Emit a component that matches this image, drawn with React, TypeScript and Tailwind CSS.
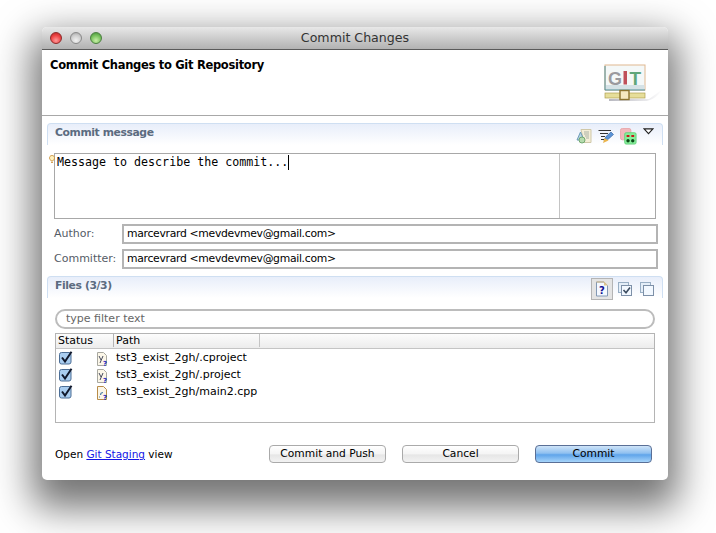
import type { ReactNode } from "react";

const uiFont = "font-['DejaVu_Sans',sans-serif]";

function TrafficLight({ color }: { color: "red" | "gray" | "green" }) {
  const fill =
    color === "red"
      ? "bg-[radial-gradient(circle_at_50%_75%,#ff9a9a_0%,#ee4444_55%,#b52020_100%)] border-[#8e2a2a]"
      : color === "green"
        ? "bg-[radial-gradient(circle_at_50%_75%,#c9f0a8_0%,#79c25e_55%,#3f8a34_100%)] border-[#4b7f40]"
        : "bg-[radial-gradient(circle_at_50%_75%,#f2f2f2_0%,#cfcfcf_55%,#a0a0a0_100%)] border-[#8a8a8a]";
  return <span className={`h-[12px] w-[12px] rounded-full border ${fill}`} />;
}

function GitLogo() {
  return (
    <svg width="62" height="40" viewBox="0 0 62 40">
      <defs>
        <linearGradient id="gitShade" x1="0" x2="1" y1="0" y2="0">
          <stop offset="0" stopColor="#b8b8c0" />
          <stop offset="1" stopColor="#ffffff" />
        </linearGradient>
      </defs>
      <path d="M6 35 H46 L60 25 C56 30 52 35 44 37 H6 Z" fill="url(#gitShade)" />
      <rect x="2" y="1" width="40" height="25" fill="#f4f8f8" stroke="#e0b890" strokeWidth="1" />
      <rect x="2.5" y="21" width="39" height="5" fill="#d5e2e6" />
      <path d="M2 2 V26 H42" fill="none" stroke="#4f8e96" strokeWidth="1" />
      <text x="5" y="20.5" fontFamily="Liberation Sans, sans-serif" fontWeight="700" fontSize="18" fill="#9a9a9e">G</text>
      <rect x="20.5" y="7" width="3.5" height="13.5" fill="#c0505a" />
      <text x="26.5" y="20.5" fontFamily="Liberation Sans, sans-serif" fontWeight="700" fontSize="19" fill="#5fa67a">T</text>
      <rect x="2" y="29" width="40" height="5" fill="#e6de9a" stroke="#b0a050" strokeWidth="0.7" />
      <rect x="17" y="26.5" width="9" height="9" fill="#f6e8c0" stroke="#8d7430" strokeWidth="1.4" />
    </svg>
  );
}

function TemplateIcon() {
  return (
    <svg width="16" height="16" viewBox="0 0 16 16">
      <path d="M5 1.5 H15 V14.5 H8 Z" fill="#f4eed8" stroke="#d0c8a8" />
      <path d="M8 4 H13 M8 6 H13 M9 8 H13 M10 10 H13" stroke="#a9b0a4" />
      <path d="M4.5 4 L1 12 H8 Z" fill="#b8d4e4" stroke="#6c9cb8" />
      <circle cx="6" cy="12" r="3" fill="#b6dcae" stroke="#72a870" />
    </svg>
  );
}

function SignIcon() {
  return (
    <svg width="16" height="16" viewBox="0 0 16 16">
      <path d="M0.5 2.5 H13 M2 5.5 H10 M3 8.5 H7 M3 11.5 H6" stroke="#333" />
      <path d="M6 12.5 L8 8.5 L13 4 L15.5 6.5 L10.5 11 Z" fill="#5b93d6" stroke="#2f5f9e" strokeWidth="0.6" />
      <path d="M5 15 L6.5 10 L10.5 12.5 Z" fill="#eab44c" />
    </svg>
  );
}

function ChangeIdIcon() {
  return (
    <svg width="17" height="17" viewBox="0 0 18 18">
      <rect x="0.5" y="0.5" width="11" height="12" rx="2" fill="#f2b8bc" stroke="#e8a8ac" />
      <rect x="5" y="5" width="12" height="12" rx="1.5" fill="#86f09a" stroke="#66d07c" />
      <path d="M7 8.5 H10 M12 8.5 H15" stroke="#c81818" strokeWidth="2" />
      <circle cx="8.5" cy="13.5" r="1.8" fill="#0c4a18" />
      <circle cx="13.5" cy="13.5" r="1.8" fill="#0c4a18" />
    </svg>
  );
}

function MenuTriangle() {
  return (
    <svg width="11" height="7" viewBox="0 0 12 8" className="self-start">
      <path d="M1 1 H11 L6 6.5 Z" fill="#fff" stroke="#222" strokeWidth="1.2" />
    </svg>
  );
}

function UntrackedIcon() {
  return (
    <svg width="14" height="16" viewBox="0 0 14 16">
      <path d="M1.5 1 H9 L12.5 4.5 V15 H1.5 Z" fill="#f4f8ff" stroke="#8298b4" />
      <path d="M9 0.5 V4.5 H13 Z" fill="#ddc48c" />
      <path d="M1.5 1 H9" stroke="#d8bc84" />
      <text x="7" y="12.5" textAnchor="middle" fontFamily="DejaVu Sans, sans-serif" fontWeight="700" fontSize="10" fill="#101090">?</text>
    </svg>
  );
}

function StackIcon({ checked }: { checked: boolean }) {
  return (
    <svg width="14" height="14" viewBox="0 0 14 14">
      <rect x="0.5" y="0.5" width="10" height="10" fill="#e4eef8" stroke="#98aec4" />
      <rect x="3.5" y="3.5" width="10" height="10" fill="#f2f8ff" stroke="#7d90a8" />
      {checked && <path d="M5.5 8 L8 10.8 L12 5.5" fill="none" stroke="#3c4c60" strokeWidth="1.6" />}
    </svg>
  );
}

function TableCheck() {
  return (
    <svg width="14" height="14" viewBox="0 0 14 14" className="shrink-0 -translate-y-px">
      <rect x="0.5" y="1.5" width="11.5" height="11.5" rx="2" fill="#a9cdf0" stroke="#4c6e96" />
      <path d="M3 6.5 L6 10.5 L12.5 0.8" fill="none" stroke="#10182c" strokeWidth="2" />
    </svg>
  );
}

function FileIcon({ kind }: { kind: "xml" | "cpp" }) {
  return (
    <svg width="11" height="14" viewBox="0 0 11 14" className="shrink-0">
      <path d="M0.5 0.5 H6.5 L9.5 3.5 V13.5 H0.5 Z" fill="#fbf6e8" stroke={kind === "xml" ? "#a8a8a0" : "#b88c48"} />
      {kind === "xml" ? (
        <path d="M2 4 L4 8 M6 4 L3 11" stroke="#44485c" strokeWidth="1" fill="none" />
      ) : (
        <path d="M6 6.5 C4.5 6.5 3.5 7.5 3.5 9 M2 11 H3" stroke="#5080a8" strokeWidth="1.2" fill="none" />
      )}
      <text x="8" y="13.5" textAnchor="middle" fontFamily="DejaVu Sans, sans-serif" fontWeight="700" fontSize="7" fill="#1828c0">?</text>
    </svg>
  );
}

function SectionHeader({ title, children }: { title: string; children: ReactNode }) {
  return (
    <div className="flex h-[22px] items-center justify-between rounded-t-[4px] border-x border-t border-[#cfdff2] bg-gradient-to-b from-[#e8eefa] to-white pl-[7px]">
      <span className="pb-[3px] text-[10.8px] font-bold tracking-[-0.4px] text-[#5b6b80]">{title}</span>
      {children}
    </div>
  );
}

function IdentityRow({ label, value }: { label: string; value: string }) {
  return (
    <div className="flex h-[20px] items-center">
      <span className="w-[68px] text-[11px] text-[#555c66]">{label}</span>
      <div className="flex h-[20px] flex-1 items-center border-2 border-[#b4b4b4] pl-[3px] text-[10.8px] tracking-[-0.3px] text-black">
        {value}
      </div>
    </div>
  );
}

function FileRow({ path, kind }: { path: string; kind: "xml" | "cpp" }) {
  return (
    <div className="flex h-[17px] items-center pl-[3px] text-[11px] text-black">
      <TableCheck />
      <span className="ml-[24px] mr-[8px] flex">
        <FileIcon kind={kind} />
      </span>
      {path}
    </div>
  );
}

function MacButton({ label, primary }: { label: string; primary?: boolean }) {
  const look = primary
    ? "border-[#5a6f96] bg-[linear-gradient(#cfe4f8_0%,#8fc0f0_45%,#5fa4ea_55%,#a6d4fa_100%)]"
    : "border-[#aaaaaa] bg-[linear-gradient(#ffffff_0%,#f4f4f4_50%,#e6e6e6_55%,#f2f2f2_100%)]";
  return (
    <button className={`flex h-[18px] w-[117px] items-center justify-center rounded-[4px] border text-[10.7px] text-black ${look}`}>
      {label}
    </button>
  );
}

export default function App() {
  return (
    <div className={`h-[533px] w-[716px] overflow-hidden bg-white pl-[42px] pt-[27px] ${uiFont}`}>
      <div className="flex h-[453px] w-[626px] flex-col rounded-[5px] bg-white shadow-[0_18px_38px_10px_rgba(0,0,0,0.55)]">
        {/* title bar */}
        <div className="relative flex h-[23px] shrink-0 items-center gap-[8px] rounded-t-[5px] border-b border-[#5a5a5a] bg-gradient-to-b from-[#e8e8e8] to-[#b2b2b2] pl-[8px]">
          <TrafficLight color="red" />
          <TrafficLight color="gray" />
          <TrafficLight color="green" />
          <span className="absolute inset-x-0 text-center text-[12.6px] text-[#333]">Commit Changes</span>
        </div>

        {/* banner */}
        <div className="flex h-[66px] shrink-0 justify-between border-b border-[#a8a8a8] pl-[8px] pr-[3px] pt-[7px]">
          <span className="text-[11.5px] font-bold leading-[16px] tracking-[-0.3px] text-black">Commit Changes to Git Repository</span>
          <div className="mt-[7px]">
            <GitLogo />
          </div>
        </div>

        <div className="flex flex-1 flex-col px-[5px] pt-[7px]">
          {/* commit message */}
          <SectionHeader title="Commit message">
            <div className="flex items-start gap-[6px] pr-[8px] pt-[4px]">
              <TemplateIcon />
              <SignIcon />
              <ChangeIdIcon />
              <MenuTriangle />
            </div>
          </SectionHeader>
          <div className="mt-[8px] flex flex-col gap-[5px] pl-[7px] pr-[5px]">
            <div className="relative mr-[2px] flex h-[66px] border border-[#a8a8a8]">
              <svg width="6" height="9" viewBox="0 0 6 9" className="absolute -left-[6px] top-[1px]">
                <path d="M3 0.5 C5 0.5 5.5 2 5.5 3 C5.5 4.5 4 5 4 6 H2 C2 5 0.5 4.5 0.5 3 C0.5 2 1 0.5 3 0.5 Z M2 7.5 H4" fill="#fff2c0" stroke="#c88a30" strokeWidth="0.8" />
              </svg>
              <div className="flex flex-1 items-start border-r border-[#c4c4c4] pl-[2px]">
                <span className="font-['DejaVu_Sans_Mono',monospace] text-[11.65px] leading-[16px] text-black">
                  Message to describe the commit...
                </span>
                <span className="mt-[1px] h-[15px] w-px bg-black" />
              </div>
              <div className="w-[95px]" />
            </div>
            <IdentityRow label="Author:" value="marcevrard <mevdevmev@gmail.com>" />
            <IdentityRow label="Committer:" value="marcevrard <mevdevmev@gmail.com>" />
          </div>

          {/* files */}
          <div className="mt-[7px]">
            <SectionHeader title="Files (3/3)">
              <div className="flex items-center pr-[8px]">
                <span className="mt-[3px] flex h-[22px] w-[22px] items-center justify-center border border-[#b4b4b4] bg-[#e4e4e4]">
                  <UntrackedIcon />
                </span>
                <span className="ml-[5px] mt-[3px] flex">
                  <StackIcon checked />
                </span>
                <span className="ml-[8px] mt-[3px] flex">
                  <StackIcon checked={false} />
                </span>
              </div>
            </SectionHeader>
          </div>
          <div className="mt-[11px] flex flex-col pl-[8px] pr-[8px]">
            <div className="flex h-[20px] items-center rounded-full border-2 border-[#bcbcbc] pl-[9px] text-[11px] text-[#666]">
              type filter text
            </div>
            <div className="mt-[4px] flex h-[90px] flex-col border border-[#b4b4b4]">
              <div className="flex h-[15px] items-start border-b border-[#c4c4c4] bg-[linear-gradient(#fcfcfc,#ececec)] text-[11px] text-black">
                <span className="w-[58px] border-r border-[#b4b4b4] pl-[2px] leading-[13px]">Status</span>
                <span className="w-[146px] border-r border-[#c4c4c4] pl-[2px] leading-[13px]">Path</span>
              </div>
              <div className="pt-[1px]">
                <FileRow path="tst3_exist_2gh/.cproject" kind="xml" />
                <FileRow path="tst3_exist_2gh/.project" kind="xml" />
                <FileRow path="tst3_exist_2gh/main2.cpp" kind="cpp" />
              </div>
            </div>
          </div>

          {/* footer */}
          <div className="mt-[22px] flex items-center pl-[8px] pr-[11px] text-[10.5px] text-black">
            <span className="flex-1 pt-[2px]">
              Open <a className="text-[#1414e6] underline">Git Staging</a> view
            </span>
            <div className="flex gap-[16px]">
              <MacButton label="Commit and Push" />
              <MacButton label="Cancel" />
              <MacButton label="Commit" primary />
            </div>
          </div>
        </div>
      </div>
    </div>
  );
}
